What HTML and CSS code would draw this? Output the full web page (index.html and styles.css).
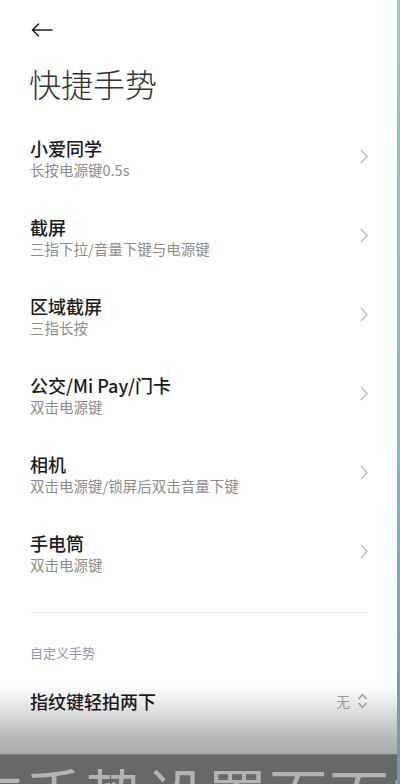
FILE: index.html
```html
<!DOCTYPE html>
<html lang="zh-CN">
<head>
    <meta charset="UTF-8">
    <meta name="viewport" content="width=device-width, initial-scale=1.0">
    <title>快捷手势</title>
    <link rel="stylesheet" href="styles.css">
</head>
<body>

    <div class="screen">
        <div class="page">
            <div class="topbar">
                <svg class="back" width="22" height="14" viewBox="0 0 22 14">
                    <path d="M21 7H1.5M7.5 1L1.5 7l6 6" fill="none" stroke="#222" stroke-width="1.6" stroke-linecap="round" stroke-linejoin="round"/>
                </svg>
            </div>

            <h1>快捷手势</h1>

            <ul class="list">
                <li class="item">
                    <div class="text">
                        <div class="title">小爱同学</div>
                        <div class="sub">长按电源键0.5s</div>
                    </div>
                    <svg class="chev" width="8" height="15" viewBox="0 0 8 15"><path d="M1 1l6 6.5L1 14" fill="none" stroke="#bdbdbd" stroke-width="1.4"/></svg>
                </li>
                <li class="item">
                    <div class="text">
                        <div class="title">截屏</div>
                        <div class="sub">三指下拉/音量下键与电源键</div>
                    </div>
                    <svg class="chev" width="8" height="15" viewBox="0 0 8 15"><path d="M1 1l6 6.5L1 14" fill="none" stroke="#bdbdbd" stroke-width="1.4"/></svg>
                </li>
                <li class="item">
                    <div class="text">
                        <div class="title">区域截屏</div>
                        <div class="sub">三指长按</div>
                    </div>
                    <svg class="chev" width="8" height="15" viewBox="0 0 8 15"><path d="M1 1l6 6.5L1 14" fill="none" stroke="#bdbdbd" stroke-width="1.4"/></svg>
                </li>
                <li class="item">
                    <div class="text">
                        <div class="title">公交/Mi Pay/门卡</div>
                        <div class="sub">双击电源键</div>
                    </div>
                    <svg class="chev" width="8" height="15" viewBox="0 0 8 15"><path d="M1 1l6 6.5L1 14" fill="none" stroke="#bdbdbd" stroke-width="1.4"/></svg>
                </li>
                <li class="item">
                    <div class="text">
                        <div class="title">相机</div>
                        <div class="sub">双击电源键/锁屏后双击音量下键</div>
                    </div>
                    <svg class="chev" width="8" height="15" viewBox="0 0 8 15"><path d="M1 1l6 6.5L1 14" fill="none" stroke="#bdbdbd" stroke-width="1.4"/></svg>
                </li>
                <li class="item">
                    <div class="text">
                        <div class="title">手电筒</div>
                        <div class="sub">双击电源键</div>
                    </div>
                    <svg class="chev" width="8" height="15" viewBox="0 0 8 15"><path d="M1 1l6 6.5L1 14" fill="none" stroke="#bdbdbd" stroke-width="1.4"/></svg>
                </li>
            </ul>

            <div class="divider"></div>

            <div class="section-label">自定义手势</div>

            <div class="fade">
                <div class="row">
                    <div class="title">指纹键轻拍两下</div>
                    <div class="value">
                        <span>无</span>
                        <svg width="11" height="16" viewBox="0 0 11 16"><path d="M1.5 6l4-4.5 4 4.5M1.5 10l4 4.5 4-4.5" fill="none" stroke="#9a9a9a" stroke-width="1.4"/></svg>
                    </div>
                </div>
            </div>

            <div class="caption">
                <div class="caption-text">在手势设置页面中</div>
            </div>
        </div>
        <div class="edge"></div>
    </div>

</body>
</html>
```

FILE: styles.css
```css
body {
    margin: 0;
    padding: 0;
    font-family: "Noto Sans CJK SC", "Noto Sans", sans-serif;
    background-color: #fff;
    color: #1a1a1a;
    overflow: hidden;
}

.screen {
    display: flex;
    width: 400px;
    height: 784px;
    overflow: hidden;
}

.page {
    flex: 1;
    min-width: 0;
    overflow: hidden;
    display: flex;
    flex-direction: column;
    background-color: #fff;
}

.edge {
    width: 3px;
    flex-shrink: 0;
    background: linear-gradient(to bottom, #8ecdc4, #7bbcc0 60%, #5b9db6);
}

.topbar {
    height: 60px;
    display: flex;
    align-items: center;
    padding-left: 31px;
}

.back {
    display: block;
}

h1 {
    margin: 3px 0 0 29px;
    font-size: 32px;
    line-height: 40px;
    font-weight: 300;
    color: #333;
}

.list {
    list-style: none;
    margin: 16px 0 0;
    padding: 0;
}

.item {
    height: 79px;
    box-sizing: border-box;
    padding: 17px 29px 18px 30px;
    display: flex;
    align-items: center;
    justify-content: space-between;
}

.title {
    font-size: 18px;
    line-height: 24px;
    font-weight: 500;
    color: #1a1a1a;
}

.sub {
    font-size: 14.5px;
    line-height: 20px;
    color: #8c8c8c;
}

.chev {
    display: block;
    flex-shrink: 0;
    margin-top: -3px;
}

.divider {
    height: 1px;
    margin: 19px 29px 0 30px;
    background-color: #ececec;
}

.section-label {
    margin: 30px 0 0 30px;
    font-size: 13px;
    line-height: 20px;
    color: #8d93b3;
}

.fade {
    margin-top: 22px;
    height: 69px;
    box-sizing: border-box;
    padding: 4px 29px 0 30px;
    background: linear-gradient(to bottom, #fff 0%, #e2e2e2 35%, #bdbdbd 70%, #aaaaaa 100%);
}

.row {
    display: flex;
    align-items: center;
    justify-content: space-between;
    height: 24px;
}

.value {
    display: flex;
    align-items: center;
    gap: 7px;
    font-size: 14px;
    color: #9a9a9a;
}

.value svg {
    display: block;
}

.caption {
    height: 30px;
    background-color: #686868;
    border-top: 1px solid #7a7a7a;
    box-sizing: border-box;
    overflow: hidden;
    padding-top: 9px;
}

.caption-text {
    margin-left: -37px;
    font-size: 60px;
    line-height: 60px;
    letter-spacing: 1px;
    white-space: nowrap;
    color: #b3b3b3;
}
```
